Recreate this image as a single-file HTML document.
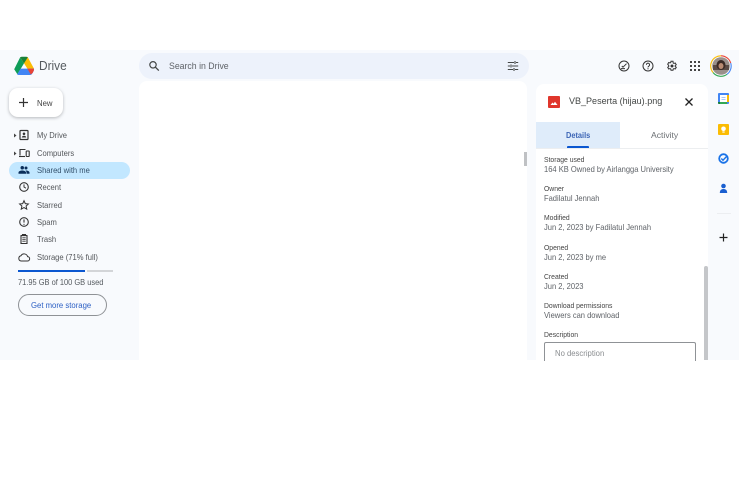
<!DOCTYPE html>
<html>
<head>
<meta charset="utf-8">
<style>
html,body{margin:0;padding:0;width:750px;height:500px;background:#fff;overflow:hidden}
body{font-family:"Liberation Sans",sans-serif;color:#444746}
#r{position:absolute;left:0;top:0;width:750px;height:500px;overflow:hidden;filter:blur(.35px)}
.a{position:absolute;white-space:nowrap}
.s{transform-origin:0 0}
.n{position:absolute;left:37px;font-size:8.6px;line-height:12px;color:#53565a;white-space:nowrap;transform:scaleX(.885);transform-origin:0 0}
.i{position:absolute;overflow:visible}
.l{position:absolute;left:544px;font-size:7.4px;line-height:10px;color:#444;white-space:nowrap;transform:scaleX(.92);transform-origin:0 0}
.v{position:absolute;left:544px;font-size:8.3px;line-height:11px;color:#5f6368;white-space:nowrap;transform:scaleX(.91);transform-origin:0 0}
</style>
</head>
<body>
<div id="r">
<div class="a" style="left:0;top:50px;width:739px;height:310px;background:#f8fafd"></div>
<div class="a" style="left:139px;top:81px;width:388px;height:279px;background:#fff;border-radius:8px 8px 0 0"></div>
<div class="a" style="left:139px;top:53px;width:390px;height:26px;background:#edf2fb;border-radius:13px"></div>

<!-- Logo -->
<svg class="i" style="left:13px;top:56px" width="22" height="20" viewBox="0 0 22 20">
<path d="M7.200 1.200 L11 7.400 L4.400 18.300 L1.200 13.200 Z" fill="#0f9d58"/>
<path d="M7.200 1.200 L14.800 1.200 L21 12.600 L14.400 12.600 Z" fill="#fbbc04"/>
<path d="M7.200 1.200 Q8 .8 9 .8 L13 .8 Q14.200 .8 14.800 1.200 L11 7.400 Z" fill="#188038"/>
<path d="M7.600 12.600 L21 12.600 Q21.200 14.600 20 16.400 L18.800 18.200 Q18 19 16.500 19 L5.500 19 Q4.600 19 4.200 18.400 Z" fill="#4285f4"/>
<path d="M21 12.600 L14.400 12.600 L17.800 18.600 L19.800 16.600 Q21.200 14.600 21 12.600 Z" fill="#ea4335"/>
</svg>
<div class="a s" style="left:39px;top:59px;font-size:12.5px;line-height:15px;color:#555a5f;transform:scaleX(.95)">Drive</div>

<!-- Search -->
<svg class="i" style="left:148px;top:60px" width="12" height="12" viewBox="0 0 12 12"><circle cx="5" cy="4.800" r="3.200" fill="none" stroke="#444746" stroke-width="1.200"/><path d="M7.400 7.200l3.400 3.400" stroke="#444746" stroke-width="1.300"/></svg>
<div class="a s" style="left:169px;top:60px;font-size:9.2px;line-height:12px;color:#5f6368;transform:scaleX(.95)">Search in Drive</div>
<svg class="i" style="left:507px;top:60px" width="12" height="12" viewBox="0 0 12 12"><path d="M.8 2.500h6.200M9 2.500h2.200M.8 6h2.200M5 6h6.200M.8 9.500h5.200M8 9.500h3.200M8 1v3M4 4.500v3M7 8v3" stroke="#444746" stroke-width="1.100"/></svg>

<!-- New -->
<div class="a" style="left:9px;top:88px;width:54px;height:29px;background:#fff;border-radius:9px;box-shadow:0 1px 3px rgba(60,64,67,.35)"></div>
<svg class="i" style="left:18px;top:97px" width="11" height="11" viewBox="0 0 11 11"><path d="M5.500 1v9M1 5.500h9" stroke="#333" stroke-width="1.200"/></svg>
<div class="a s" style="left:37px;top:97px;font-size:8.6px;line-height:12px;color:#444;transform:scaleX(.9)">New</div>

<!-- Nav -->
<div class="a" style="left:9px;top:162px;width:121px;height:17px;background:#c2e7ff;border-radius:9px"></div>
<svg class="i" style="left:13px;top:133px" width="4" height="5"><path d="M1 .5L3.500 2.500 1 4.500z" fill="#444"/></svg>
<svg class="i" style="left:13px;top:151px" width="4" height="5"><path d="M1 .5L3.500 2.500 1 4.500z" fill="#444"/></svg>

<svg class="i" style="left:18px;top:129px" width="12" height="12" viewBox="0 0 12 12"><rect x="2" y="1.500" width="8" height="9" rx=".8" fill="none" stroke="#333" stroke-width="1.200"/><circle cx="6" cy="4.800" r="1.300" fill="#333"/><path d="M3.700 8.500c.3-1.300 1.200-1.800 2.300-1.800s2 .5 2.300 1.800z" fill="#333"/></svg>
<div class="n" style="top:129px">My Drive</div>

<svg class="i" style="left:18px;top:147px" width="12" height="12" viewBox="0 0 12 12"><path d="M7.500 2.500H2v6" fill="none" stroke="#333" stroke-width="1.100"/><path d="M1 9.500h6" stroke="#333" stroke-width="1.100"/><rect x="8.200" y="4" width="3" height="5.500" rx=".5" fill="none" stroke="#333" stroke-width="1.100"/></svg>
<div class="n" style="top:147px">Computers</div>

<svg class="i" style="left:18px;top:164px" width="12" height="12" viewBox="0 0 24 24"><path d="M16 11a3 3 0 1 0 0-6 3 3 0 0 0 0 6zm-7.500 0a3.500 3.500 0 1 0 0-7 3.500 3.500 0 0 0 0 7zM8.500 13C5.500 13 1 14.400 1 17v2.500h15V17c0-2.600-4.500-4-7.500-4zm7.500 0c-.4 0-.8 0-1.200.1 1.300.9 2.200 2.200 2.200 3.900v2.500h6V17c0-2.600-4.300-4-7-4z" fill="#0b2e5a"/></svg>
<div class="n" style="top:164px;color:#33506b">Shared with me</div>

<svg class="i" style="left:18px;top:181px" width="12" height="12" viewBox="0 0 12 12"><circle cx="6" cy="6" r="4.300" fill="none" stroke="#333" stroke-width="1.100"/><path d="M6 3.400V6l1.900 1.200" fill="none" stroke="#333" stroke-width="1"/></svg>
<div class="n" style="top:181px">Recent</div>

<svg class="i" style="left:18px;top:199px" width="12" height="12" viewBox="0 0 24 24"><path d="M12 3.500l2.600 5.700 6.200.7-4.600 4.200 1.300 6.100L12 17.100l-5.500 3.100 1.300-6.100L3.200 9.900l6.200-.7z" fill="none" stroke="#333" stroke-width="2"/></svg>
<div class="n" style="top:199px">Starred</div>

<svg class="i" style="left:18px;top:216px" width="12" height="12" viewBox="0 0 12 12"><circle cx="6" cy="6" r="4.300" fill="none" stroke="#333" stroke-width="1.100"/><path d="M6 3.400v3.200" stroke="#333" stroke-width="1.100"/><circle cx="6" cy="8.300" r=".6" fill="#333"/></svg>
<div class="n" style="top:216px">Spam</div>

<svg class="i" style="left:18px;top:233px" width="12" height="12" viewBox="0 0 12 12"><path d="M2.500 2.600h7M4.500 2.500V1.500h3v1M3 3v7.500h6V3" fill="none" stroke="#333" stroke-width="1.100"/><path d="M4.300 4.800h3.400M4.300 6.500h3.400M4.300 8.200h3.400" stroke="#333" stroke-width=".8"/></svg>
<div class="n" style="top:233px">Trash</div>

<svg class="i" style="left:18px;top:251px" width="12" height="12" viewBox="0 0 12 12"><path d="M3 10h6.300a2.200 2.200 0 0 0 .3-4.400A3.600 3.600 0 0 0 3 4.700 2.700 2.700 0 0 0 3 10z" fill="none" stroke="#333" stroke-width="1"/></svg>
<div class="n" style="top:251px">Storage (71% full)</div>

<div class="a" style="left:18px;top:270px;width:67px;height:2px;background:#0b57d0"></div>
<div class="a" style="left:87px;top:270px;width:26px;height:2px;background:#d3d5d8"></div>
<div class="a s" style="left:18px;top:276px;font-size:8.4px;line-height:12px;color:#555a5f;transform:scaleX(.89)">71.95 GB of 100 GB used</div>
<div class="a" style="left:18px;top:294px;width:87px;height:20px;border:1px solid #8f9296;border-radius:11px"></div>
<div class="a s" style="left:31px;top:299px;font-size:8.6px;line-height:12px;color:#2b5fc4;transform:scaleX(.9)">Get more storage</div>

<!-- Scroll nub -->
<div class="a" style="left:524px;top:152px;width:3px;height:14px;background:#bfc1c4"></div>

<!-- Header icons -->
<svg class="i" style="left:618px;top:60px" width="12" height="12" viewBox="0 0 12 12"><circle cx="6" cy="6" r="5" fill="none" stroke="#333" stroke-width="1"/><path d="M8.500 3.700L5 7.200 3.800 6M3 8.600h4" fill="none" stroke="#333" stroke-width="1"/></svg>
<svg class="i" style="left:642px;top:60px" width="12" height="12" viewBox="0 0 12 12"><circle cx="6" cy="6" r="5" fill="none" stroke="#333" stroke-width="1"/><path d="M4.400 4.800a1.600 1.600 0 1 1 2.600 1.200c-.6.500-1 .7-1 1.400" fill="none" stroke="#333" stroke-width="1"/><circle cx="6" cy="8.800" r=".6" fill="#333"/></svg>
<svg class="i" style="left:666px;top:60px" width="12" height="12" viewBox="0 0 24 24"><path d="M19.400 13c.1-.3.100-.7.100-1s0-.7-.1-1l2.100-1.600-2-3.500-2.500 1a7.500 7.500 0 0 0-1.700-1L15 2.500h-4l-.4 2.400a7.500 7.500 0 0 0-1.700 1l-2.500-1-2 3.500L6.500 11c-.1.300-.1.700-.1 1s0 .7.100 1l-2.100 1.600 2 3.500 2.500-1c.5.400 1.100.7 1.700 1l.4 2.400h4l.4-2.400c.6-.3 1.200-.6 1.700-1l2.500 1 2-3.500z" transform="translate(-1 0)" fill="none" stroke="#333" stroke-width="2"/><circle cx="12" cy="12" r="3" fill="#333"/></svg>
<svg class="i" style="left:690px;top:61px" width="10" height="10" viewBox="0 0 10 10" fill="#444"><rect x="0" y="0" width="2" height="2"/><rect x="4" y="0" width="2" height="2"/><rect x="8" y="0" width="2" height="2"/><rect x="0" y="4" width="2" height="2"/><rect x="4" y="4" width="2" height="2"/><rect x="8" y="4" width="2" height="2"/><rect x="0" y="8" width="2" height="2"/><rect x="4" y="8" width="2" height="2"/><rect x="8" y="8" width="2" height="2"/></svg>

<!-- Avatar -->
<svg class="i" style="left:710px;top:55px" width="22" height="22" viewBox="0 0 22 22">
<circle cx="11" cy="11" r="8.800" fill="#9a8f8a"/>
<path d="M3 10h16v5H3z" fill="#5a4a45"/>
<ellipse cx="11" cy="10" rx="4.500" ry="5" fill="#3b2a25"/>
<ellipse cx="11" cy="11" rx="2.500" ry="3" fill="#b98a72"/>
<path d="M11 .8A10.200 10.200 0 0 1 20.700 8" fill="none" stroke="#ea4335" stroke-width="1.100"/>
<path d="M20.700 8A10.200 10.200 0 0 1 17 19.300" fill="none" stroke="#4285f4" stroke-width="1.100"/>
<path d="M17 19.300A10.200 10.200 0 0 1 3 17.500" fill="none" stroke="#34a853" stroke-width="1.100"/>
<path d="M3 17.500A10.200 10.200 0 0 1 11 .8" fill="none" stroke="#fbbc04" stroke-width="1.100"/>
</svg>

<!-- Details panel -->
<div class="a" style="left:536px;top:84px;width:172px;height:276px;background:#fff;border-radius:8px 8px 0 0;overflow:hidden">
  <div class="a" style="left:0;top:38px;width:84px;height:26px;background:#dfecfa"></div>
  <div class="a" style="left:0;top:64px;width:172px;height:1px;background:#eceef0"></div>
  <div class="a" style="left:31px;top:62px;width:22px;height:2px;background:#0b57d0;border-radius:1px 1px 0 0"></div>
</div>
<svg class="i" style="left:548px;top:96px" width="12" height="12" viewBox="0 0 12 12"><rect width="12" height="12" rx="1" fill="#e0362c"/><path d="M2.500 9L4.500 6.500 5.500 7.700 7 5.800 9.500 9z" fill="#fff"/></svg>
<div class="a s" style="left:569px;top:95px;font-size:9.6px;line-height:13px;color:#444746;transform:scaleX(.94)">VB_Peserta (hijau).png</div>
<svg class="i" style="left:684px;top:97px" width="10" height="10" viewBox="0 0 10 10"><path d="M1.500 1.500l7 7M8.500 1.500l-7 7" stroke="#222" stroke-width="1.300"/></svg>
<div class="a s" style="left:566px;top:129px;font-size:8.600px;line-height:12px;color:#3b64b5;font-weight:bold;transform:scaleX(.86)">Details</div>
<div class="a" style="left:651px;top:129px;font-size:8.600px;line-height:12px;color:#6a6e72">Activity</div>

<div class="l" style="top:155px">Storage used</div>
<div class="v" style="top:164px">164 KB Owned by Airlangga University</div>
<div class="l" style="top:184px">Owner</div>
<div class="v" style="top:193px">Fadilatul Jennah</div>
<div class="l" style="top:213px">Modified</div>
<div class="v" style="top:222px">Jun 2, 2023 by Fadilatul Jennah</div>
<div class="l" style="top:243px">Opened</div>
<div class="v" style="top:252px">Jun 2, 2023 by me</div>
<div class="l" style="top:272px">Created</div>
<div class="v" style="top:281px">Jun 2, 2023</div>
<div class="l" style="top:301px">Download permissions</div>
<div class="v" style="top:310px">Viewers can download</div>
<div class="l" style="top:330px">Description</div>
<div class="a" style="left:544px;top:342px;width:150px;height:18px;border:1px solid #8f9296;border-bottom:0;border-radius:2px 2px 0 0"></div>
<div class="a s" style="left:555px;top:347px;font-size:8.4px;line-height:12px;color:#8a8d90;transform:scaleX(.92)">No description</div>
<div class="a" style="left:704px;top:266px;width:4px;height:94px;background:#c4c6c9;border-radius:2px 2px 0 0"></div>

<!-- Right rail -->
<svg class="i" style="left:718px;top:93px" width="11" height="11" viewBox="0 0 11 11"><rect width="11" height="11" rx="1" fill="#4285f4"/><rect x="2" y="2" width="7" height="7" fill="#fff"/><path d="M9 2h2v7H9z" fill="#fbbc04"/><path d="M2 9h7v2H2z" fill="#34a853"/><path d="M0 9h2v2H1a1 1 0 0 1-1-1z" fill="#188038"/><path d="M3.500 4h4v.8h-4zM3.500 6h4v.8h-4z" fill="#8ab4f8"/></svg>
<svg class="i" style="left:718px;top:124px" width="11" height="11" viewBox="0 0 11 11"><rect width="11" height="11" rx="1" fill="#fbbc04"/><circle cx="5.500" cy="4.800" r="2.300" fill="#fff"/><rect x="4.300" y="7.500" width="2.400" height="1.100" fill="#fff"/></svg>
<svg class="i" style="left:718px;top:153px" width="11" height="11" viewBox="0 0 11 11"><circle cx="5.500" cy="5.500" r="4.300" fill="none" stroke="#1a73e8" stroke-width="1.800"/><path d="M3.300 5.500l1.700 1.700 3.500-3.700" fill="none" stroke="#1a73e8" stroke-width="1.400"/></svg>
<svg class="i" style="left:718px;top:183px" width="11" height="11" viewBox="0 0 11 11"><circle cx="5.500" cy="3" r="2.300" fill="#1a5fd0"/><path d="M1.800 10c0-3 1.700-4 3.700-4s3.700 1 3.700 4z" fill="#1a5fd0"/></svg>
<div class="a" style="left:717px;top:213px;width:14px;height:1px;background:#eceef1"></div>
<svg class="i" style="left:718px;top:232px" width="11" height="11" viewBox="0 0 11 11"><path d="M5.500 1.500v8M1.500 5.500h8" stroke="#222" stroke-width="1.200"/></svg>
</div>
</body>
</html>
